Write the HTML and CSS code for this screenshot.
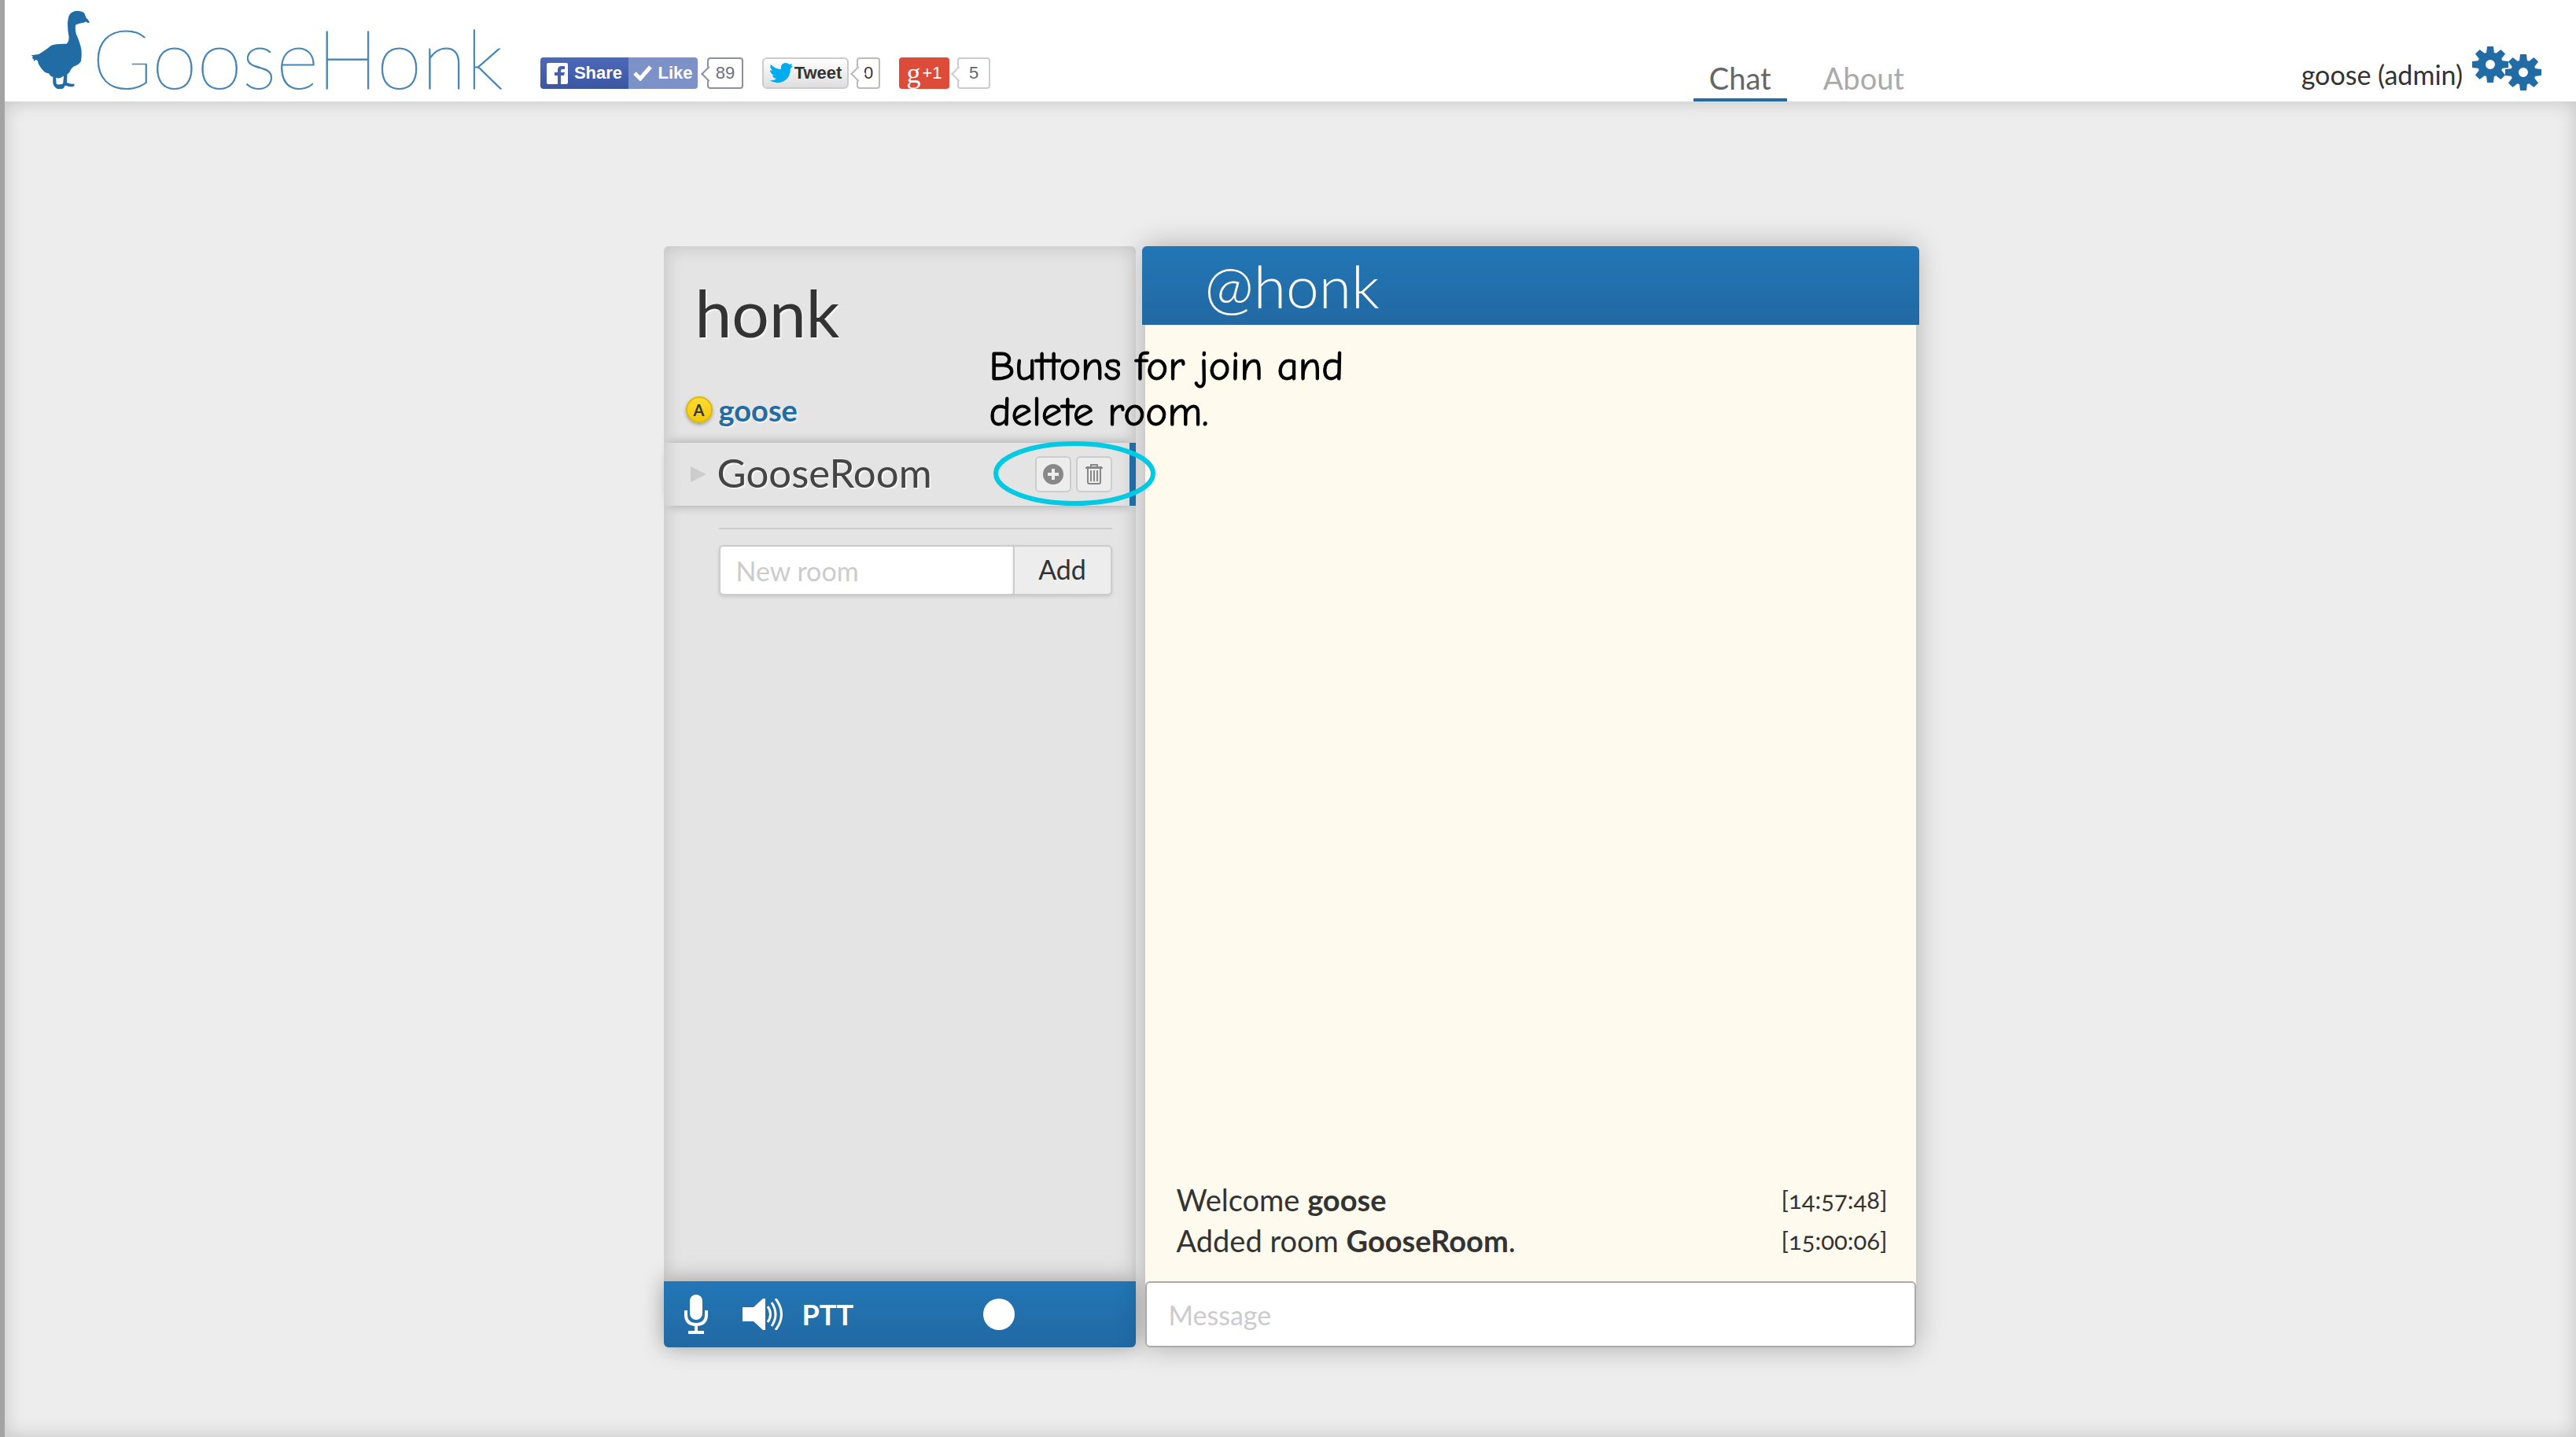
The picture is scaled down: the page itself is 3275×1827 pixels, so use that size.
FILE: index.html
```html
<!DOCTYPE html>
<html lang="en">
<head>
<meta charset="utf-8">
<title>GooseHonk</title>
<link rel="stylesheet" href="styles.css">
</head>
<body>
<header class="topbar">
  <a class="logo" href="#">
    <svg class="logo-goose" viewBox="96 44 176 294" preserveAspectRatio="none" aria-hidden="true"><path fill="#226ca6" d="M228 44Q252 42 257 55L261 69Q268 75 272 88Q266 91 261 84Q253 90 242 91L230 96Q227 110 231 130Q240 155 244 174Q250 196 246 232Q243 243 231 250Q222 253 216 263Q212 277 204 284L203 314Q211 320 224 319Q229 325 222 329Q210 331 202 326Q196 323 194 335Q188 340 174 338Q163 330 161 316V292Q155 293 148 279Q136 279 125 259Q117 248 114 230L108 228L104 235L102 225L97 221L101 217L95 211L118 207Q135 195 156 174Q168 167 202 168Q210 160 209 140Q204 110 206 80Q208 49 228 44ZM170 296L171 318L176 322L189 320Q193 317 192 308L194 289Q180 302 170 296Z"/></svg>
    <span class="logo-text">GooseHonk</span>
  </a>
  <div class="social">
    <div class="social-item">
      <button class="fb-share" type="button"><svg width="27" height="27" viewBox="0 0 27 27" aria-hidden="true"><rect width="27" height="27" rx="2" fill="#fff"/><path fill="#4460ae" d="M14 27V16H10V12H14V9Q14 4 19 4H23V8H20Q18 8 18 10V12H23L22 16H18V27Z"/></svg>Share</button><button class="fb-like" type="button"><svg width="25" height="20" viewBox="0 0 25 20" aria-hidden="true"><path d="M2 10L9 17L22 2" fill="none" stroke="#fff" stroke-width="5"/></svg>Like</button>
      <span class="count fb-count">89</span>
    </div>
    <div class="social-item">
      <button class="tweet" type="button"><svg width="30" height="26" viewBox="0 0 30 26" aria-hidden="true"><path fill="#00aced" d="M2 2Q8 8 15 8Q14 1 20 0Q24 0 26 2L29 1L28 4L30 4L27 7Q27 18 19 23Q9 28 0 22Q6 23 9 20Q5 19 4 16H6Q1 13 1 9L4 10Q0 6 2 2Z"/></svg>Tweet</button>
      <span class="count tw-count">0</span>
    </div>
    <div class="social-item">
      <button class="gplus" type="button"><span class="gplus-g">g</span>+1</button>
      <span class="count gp-count">5</span>
    </div>
  </div>
  <nav class="tabs">
    <a class="tab active" href="#">Chat</a>
    <a class="tab" href="#">About</a>
  </nav>
  <div class="account">
    <span>goose (admin)</span>
    <button class="settings" type="button" aria-label="Settings"><svg width="88" height="57" viewBox="0 0 88 57" aria-hidden="true"><defs><g id="gear"><circle r="11" fill="none" stroke="#226ca6" stroke-width="10"/><g fill="#226ca6"><path id="tooth" d="M-5-14L-4-23H4L5-14Z"/><use href="#tooth" transform="rotate(45)"/><use href="#tooth" transform="rotate(90)"/><use href="#tooth" transform="rotate(135)"/><use href="#tooth" transform="rotate(180)"/><use href="#tooth" transform="rotate(225)"/><use href="#tooth" transform="rotate(270)"/><use href="#tooth" transform="rotate(315)"/></g></g></defs><use href="#gear" x="23" y="23"/><use href="#gear" x="65" y="33"/></svg></button>
  </div>
</header>
<main class="page">
  <div class="chat">
    <aside class="rooms">
      <h1 class="server">honk</h1>
      <div class="user"><span class="badge">A</span>goose</div>
      <div class="room">
        <span class="arrow"></span>
        <span class="room-name">GooseRoom</span>
        <button class="icon-btn" type="button" aria-label="Join room"><svg width="26" height="26" viewBox="0 0 26 26" aria-hidden="true"><circle cx="13" cy="13" r="13" fill="#888"/><path d="M13 6V20M6 13H20" stroke="#eee" stroke-width="4"/></svg></button>
        <button class="icon-btn" type="button" aria-label="Delete room"><svg width="22" height="26" viewBox="0 0 22 26" fill="none" stroke="#888" stroke-width="2" aria-hidden="true"><path d="M0 5H22M1 4H21M7 3V1H15V3M3 6V23Q3 25 5 25H17Q19 25 19 23V6M7 8V22M11 8V22M15 8V22"/></svg></button>
        <svg class="callout" viewBox="0 0 206 82" aria-hidden="true"><ellipse cx="103" cy="41" rx="100" ry="38" fill="none" stroke="#00cae3" stroke-width="6"/></svg>
        <p class="note">Buttons for join and<br>delete room.</p>
      </div>
      <form class="new-room">
        <input type="text" placeholder="New room" aria-label="New room"><button type="button">Add</button>
      </form>
      <div class="voice">
        <button class="voice-btn mic" type="button" aria-label="Microphone"><svg width="30" height="50" viewBox="0 0 30 50" aria-hidden="true"><rect x="7" width="16" height="32" rx="8" fill="#fff"/><path d="M2 20V25Q2 38 15 38Q28 38 28 25V20M15 38V46" fill="none" stroke="#fff" stroke-width="4"/><path d="M5 46H25V50H5Z" fill="#fff"/></svg></button>
        <button class="voice-btn speaker" type="button" aria-label="Sound"><svg width="52" height="40" viewBox="0 0 52 40" aria-hidden="true"><path d="M0 11H14L26 0H29V40H26L14 29H0Z" fill="#fff"/><path d="M32 10Q39 20 32 30M37 5Q47 20 37 35M42 0Q57 20 42 40" fill="none" stroke="#fff" stroke-width="3"/></svg></button>
        <button class="voice-btn ptt" type="button">PTT</button>
        <span class="status"></span>
      </div>
    </aside>
    <section class="conversation">
      <h2 class="channel">@honk</h2>
      <div class="log">
        <div class="line"><span>Welcome <b>goose</b></span><time>[14:57:48]</time></div>
        <div class="line"><span>Added room <b>GooseRoom</b>.</span><time>[15:00:06]</time></div>
      </div>
      <input class="message" type="text" placeholder="Message" aria-label="Message">
    </section>
  </div>
</main>
</body>
</html>
```
FILE: styles.css
```css
* { box-sizing: border-box; }
body {
  margin: 0;
  min-height: 100vh;
  display: flex;
  flex-direction: column;
  border-left: 6px solid #a3a3a3;
  background: #ededed;
  color: #333;
  font-family: Lato, "Open Sans", sans-serif;
  font-size: 38px;
}
button, input { font: inherit; color: inherit; margin: 0; }
button { border: 0; padding: 0; background: none; cursor: pointer; }
svg { display: block; }
a { color: inherit; text-decoration: none; }

.topbar {
  height: 129px;
  flex: none;
  display: flex;
  background: #fff;
  padding: 0 44px 0 34px;
}
.logo { display: flex; padding-top: 14px; width: 647px; }
.logo-goose { width: 74px; height: 99px; }
.logo-text {
  margin-left: 3px;
  font-size: 104px;
  font-weight: 100;
  line-height: 118px;
  color: #226ca6;
  -webkit-text-stroke: 1px #4a87b8;
}
.social {
  display: flex;
  gap: 24px;
  padding-top: 73px;
  font-family: "Liberation Sans", Arial, sans-serif;
  font-size: 22px;
}
.social-item { display: flex; height: 40px; }
.social button { display: flex; align-items: center; justify-content: center; font-weight: bold; }
.social .fb-share { width: 112px; gap: 8px; background: linear-gradient(#4c69ba, #3b55a0); color: #fff; border-radius: 4px 0 0 4px; }
.social .fb-like { width: 88px; gap: 6px; background: #7d91c9; color: #fff; border-radius: 0 4px 4px 0; }
.social .tweet { width: 110px; gap: 2px; border: 2px solid #ccc; border-radius: 6px; background: linear-gradient(#fff, #dedede); }
.social .gplus { width: 64px; gap: 2px; border-radius: 4px; background: #dd4b39; color: #fff; font-weight: normal; }
.gplus-g { font-family: "Liberation Serif", serif; font-size: 36px; line-height: 32px; }
.count {
  position: relative;
  border: 2px solid #bbb;
  border-radius: 4px;
  background: #fff;
  line-height: 36px;
  text-align: center;
}
.count::before {
  content: "";
  position: absolute;
  left: -7px;
  top: 12px;
  width: 12px;
  height: 12px;
  border: solid #bbb;
  border-width: 0 0 2px 2px;
  background: #fff;
  transform: rotate(45deg);
}
.fb-count { width: 46px; margin-left: 12px; color: #6a7180; }
.fb-count, .fb-count::before { border-color: #8d90a4; }
.tw-count { width: 30px; margin-left: 10px; }
.gp-count { width: 42px; margin-left: 10px; color: #666; }
.gp-count, .gp-count::before { border-color: #ccc; }

.tabs { display: flex; gap: 26px; margin-left: auto; align-items: flex-end; }
.tab {
  height: 58px;
  padding: 0 20px;
  line-height: 56px;
  color: #aaa;
  border-bottom: 4px solid transparent;
}
.tab.active { color: #666; border-color: #226ca6; }
.account {
  display: flex;
  justify-content: flex-end;
  gap: 12px;
  width: 790px;
  padding-top: 59px;
  font-size: 34px;
  line-height: 72px;
}
.settings { height: 57px; }

.page {
  flex: 1;
  display: flex;
  padding: 184px 26px 114px 24px;
  box-shadow: inset 0 0 24px rgba(0, 0, 0, .18);
}
.chat {
  flex: 1;
  max-width: 1592px;
  margin: 0 auto;
  display: grid;
  grid-template-columns: minmax(0, 600fr) minmax(0, 980fr);
  column-gap: 12px;
}
.rooms {
  display: flex;
  flex-direction: column;
  background: #e4e4e4;
  border-radius: 6px;
  box-shadow: inset 4px 4px 20px rgba(0, 0, 0, .12);
  text-shadow: 2px 2px 0 #f4f4f4;
}
.server { margin: 34px 40px 0; font-size: 84px; line-height: 100px; font-weight: 400; }
.user {
  display: flex;
  align-items: center;
  gap: 8px;
  margin-top: 50px;
  padding-left: 28px;
  height: 66px;
  padding-bottom: 18px;
  line-height: 48px;
  font-weight: 700;
  color: #226ca6;
}
.badge {
  width: 34px;
  height: 34px;
  border: 2px solid #ddb90c;
  border-radius: 50%;
  background: linear-gradient(#ffdc30, #f2c80c);
  box-shadow: 0 2px 4px rgba(0, 0, 0, .3);
  color: #333;
  font-size: 20px;
  line-height: 30px;
  text-align: center;
  text-shadow: none;
}
.room {
  position: relative;
  display: flex;
  align-items: center;
  gap: 6px;
  height: 80px;
  padding: 0 22px 0 34px;
  border-right: 8px solid #226ca6;
  box-shadow: 0 -8px 12px -8px rgba(0, 0, 0, .3), 0 8px 12px -8px rgba(0, 0, 0, .3);
}
.arrow { border: solid transparent; border-width: 10px 0 10px 20px; border-left-color: #ccc; }
.room-name { flex: 1; margin-left: 8px; padding-bottom: 4px; font-size: 51px; line-height: 72px; color: #444; }
.icon-btn {
  display: grid;
  place-items: center;
  width: 46px;
  height: 46px;
  border: 2px solid #ccc;
  border-radius: 6px;
  background: #ededed;
}
.callout { position: absolute; right: -33px; top: -2px; width: 206px; height: 82px; z-index: 2; }
.note {
  position: absolute;
  right: -272px;
  bottom: 80px;
  z-index: 2;
  width: 450px;
  margin: 0;
  padding-bottom: 10px;
  font-family: "Comic Sans MS", "Comic Neue", Lato, sans-serif;
  font-size: 53px;
  line-height: 58px;
  color: #000;
  -webkit-text-stroke: 1px #000;
  white-space: nowrap;
  text-shadow: none;
}
.new-room {
  display: flex;
  margin: 28px 22px 0 70px;
  margin-right: 30px;
  padding-top: 20px;
  border-top: 2px solid #ccc;
  font-size: 34px;
}
.new-room input, .new-room button {
  height: 64px;
  border: 2px solid #ccc;
  box-shadow: 0 2px 4px rgba(0, 0, 0, .12);
}
.new-room input { flex: 1; min-width: 0; padding: 0 20px; border-right: 0; border-radius: 6px 0 0 6px; background: #fff; }
.new-room button { width: 126px; padding-bottom: 4px; border-radius: 0 6px 6px 0; background: #ededed; }
::placeholder { color: #ccc; opacity: 1; }
.voice {
  display: flex;
  align-items: center;
  height: 84px;
  margin-top: auto;
  padding: 0 26px;
  border-radius: 0 0 6px 6px;
  background: linear-gradient(#2376b6, #2169a3);
  box-shadow: 0 0 28px rgba(0, 0, 0, .35);
  color: #fff;
  text-shadow: none;
}
.speaker { margin-left: 44px; }
.ptt { margin-left: 24px; font-size: 36px; font-weight: 700; }
.status { width: 40px; height: 40px; margin: 0 128px 0 auto; border-radius: 50%; background: #fff; }

.conversation {
  display: flex;
  flex-direction: column;
  background: #fffaee;
  border-radius: 6px;
  box-shadow: 0 0 36px rgba(0, 0, 0, .28);
}
.channel {
  height: 100px;
  margin: 0 -4px;
  padding-left: 80px;
  border-radius: 6px 6px 0 0;
  background: linear-gradient(#2376b6, #2169a3);
  color: #fffaee;
  font-size: 75px;
  font-weight: 300;
  line-height: 100px;
}
.log {
  flex: 1;
  display: flex;
  flex-direction: column;
  justify-content: flex-end;
  padding: 0 36px 26px 40px;
}
.line { display: flex; justify-content: space-between; line-height: 52px; }
.line time { font-size: 31px; font-variant-numeric: oldstyle-nums; }
.message {
  height: 84px;
  padding: 0 28px;
  border: 2px solid #aaa;
  border-radius: 6px;
  background: #fff;
  font-size: 34px;
}
```
